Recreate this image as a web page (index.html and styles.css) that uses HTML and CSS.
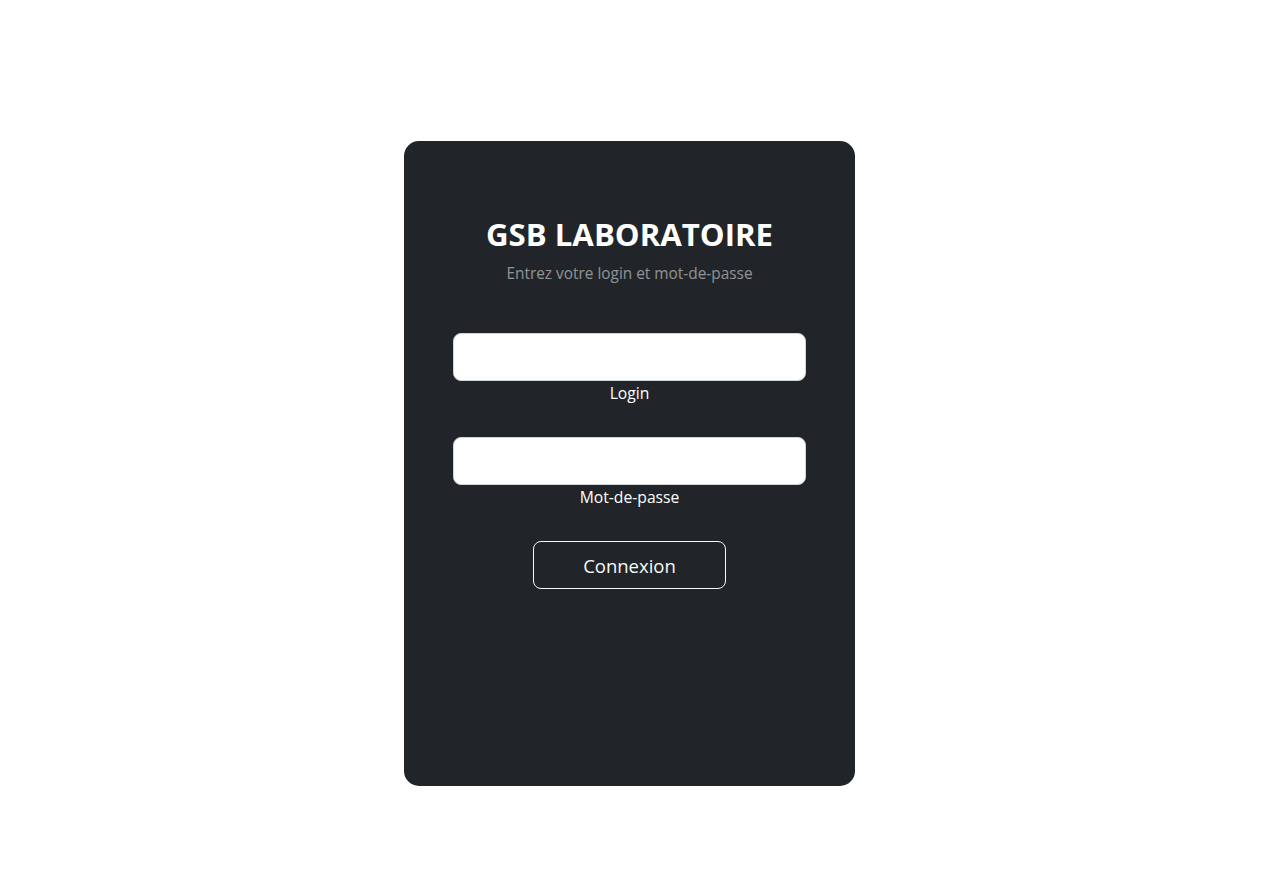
FILE: index.html
```html
<!DOCTYPE html>
<html lang="fr">
<head>
<meta charset="utf-8">
<title>GSB Laboratoire</title>
<link rel="stylesheet" href="styles.css">
</head>
<body>
<section class="page">
  <div class="card">
    <h2 class="title">GSB LABORATOIRE</h2>
    <p class="subtitle">Entrez votre login et mot-de-passe</p>
    <form class="form">
      <div class="field">
        <input type="text" class="input" id="login">
        <label class="label" for="login">Login</label>
      </div>
      <div class="field">
        <input type="password" class="input" id="mdp">
        <label class="label" for="mdp">Mot-de-passe</label>
      </div>
      <button type="button" class="btn">Connexion</button>
    </form>
  </div>
</section>
</body>
</html>
```

FILE: styles.css
```css
* { box-sizing: border-box; }
html, body { margin: 0; padding: 0; background: #fff; }
body {
  font-family: "Open Sans", "Noto Sans", "Liberation Sans", sans-serif;
  font-size: 16px;
  line-height: 1.5;
}
.page {
  display: flex;
  justify-content: center;
  padding-top: 141px;
  padding-right: 2px;
}
.card {
  width: 451px;
  height: 645px;
  background: #212529;
  border-radius: 15px;
  padding: 72px 49px 48px;
  color: #fff;
  text-align: center;
  display: flex;
  flex-direction: column;
}
.title {
  margin: 0 0 7px;
  font-size: 31.2px;
  font-weight: 700;
  line-height: 42px;
  letter-spacing: 0;
}
.subtitle {
  margin: 0 0 47px;
  font-size: 15.4px;
  line-height: 24px;
  color: rgba(255,255,255,.5);
}
.form {
  display: flex;
  flex-direction: column;
  align-items: center;
}
.field {
  width: 100%;
  display: flex;
  flex-direction: column;
  margin-bottom: 32px;
}
.input {
  width: 100%;
  height: 48px;
  border: 1px solid #ced4da;
  border-radius: 8px;
  background: #fff;
  padding: 8px 16px;
  font-family: inherit;
  font-size: 20px;
  outline: none;
}
.label {
  display: block;
  font-size: 15.7px;
  line-height: 24px;
  color: #fff;
}
.btn {
  width: 193px;
  height: 48px;
  background: transparent;
  border: 1px solid #f8f9fa;
  border-radius: 8px;
  color: #f8f9fa;
  font-family: inherit;
  font-size: 18.5px;
  padding: 0;
  cursor: pointer;
}
```
